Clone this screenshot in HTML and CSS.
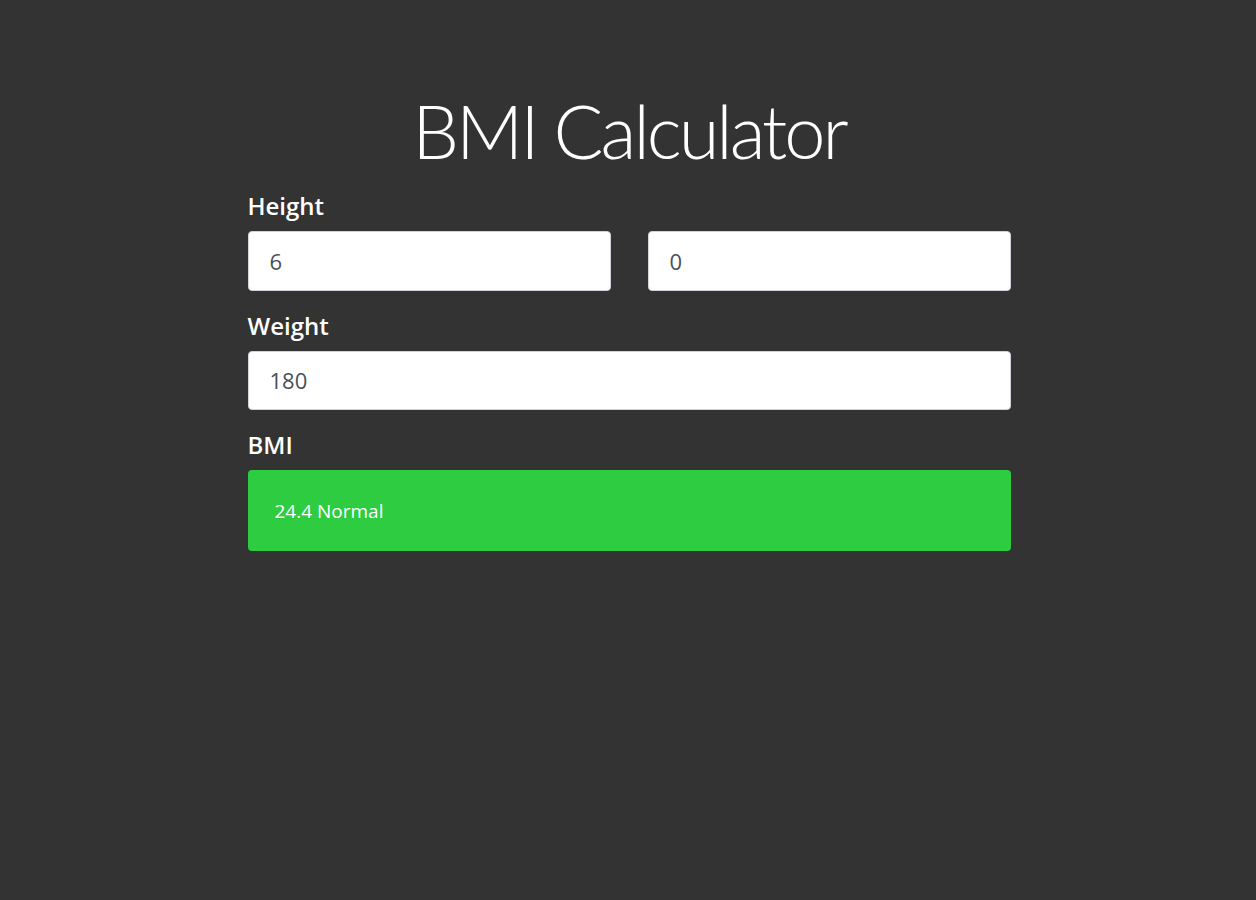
FILE: index.html
```html
<!DOCTYPE html>
<html lang="en">
<head>
<meta charset="utf-8">
<title>BMI Calculator</title>
<link rel="stylesheet" href="styles.css">
</head>
<body>
<main class="container">
  <h1 class="title">BMI Calculator</h1>
  <div class="field">
    <label class="label">Height</label>
    <div class="row">
      <input class="input" type="text" value="6">
      <input class="input" type="text" value="0">
    </div>
  </div>
  <div class="field">
    <label class="label">Weight</label>
    <input class="input" type="text" value="180">
  </div>
  <div class="field">
    <label class="label">BMI</label>
    <div class="result">24.4 Normal</div>
  </div>
</main>
</body>
</html>
```

FILE: styles.css
```css
html, body {
  margin: 0;
  padding: 0;
  background: #333333;
  font-family: "Open Sans", "Noto Sans", sans-serif;
  color: #ffffff;
}

.container {
  width: 763px;
  margin: 0 auto;
  padding: 85px 0 0 2px;
}

.title {
  margin: 0 0 14px;
  text-align: center;
  font-family: "Lato", "Open Sans", sans-serif;
  font-size: 74px;
  font-weight: 300;
  letter-spacing: -3px;
  line-height: 92px;
}

.field {
  display: flex;
  flex-direction: column;
  margin-bottom: 20px;
}

.label {
  display: block;
  font-size: 24px;
  font-weight: 600;
  line-height: 30px;
  margin-bottom: 10px;
}

.row {
  display: grid;
  grid-template-columns: 1fr 1fr;
  gap: 37px;
}

.input {
  box-sizing: border-box;
  width: 100%;
  height: 59.5px;
  padding: 0 21px;
  border: 1px solid #ced4da;
  border-radius: 4px;
  background: #ffffff;
  color: #495057;
  font-family: "Open Sans", "Noto Sans", sans-serif;
  font-size: 22px;
}

.result {
  box-sizing: border-box;
  height: 81px;
  padding: 0 27px;
  display: flex;
  align-items: center;
  background: #2ecc40;
  border-radius: 4px;
  font-size: 19px;
  color: #ffffff;
}
```
